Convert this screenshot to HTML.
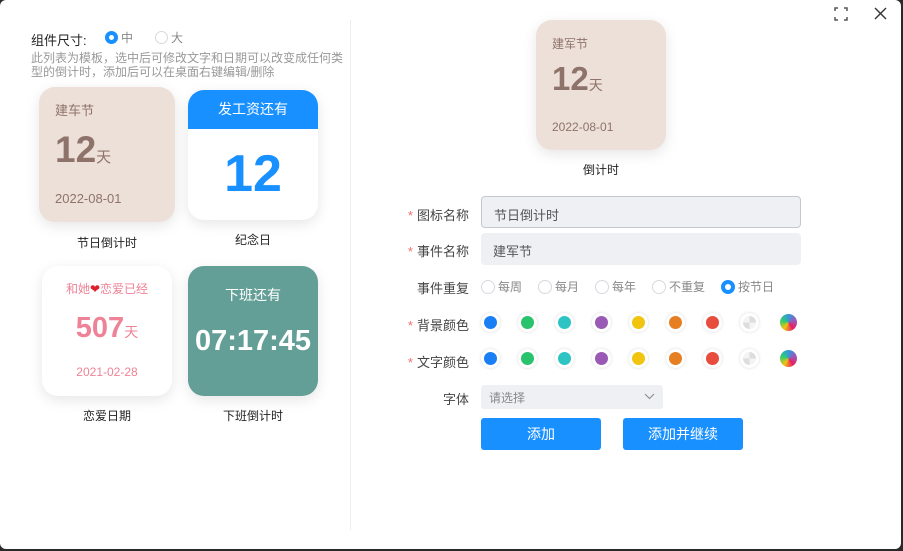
<!DOCTYPE html>
<html><head><meta charset="utf-8"><style>
*{box-sizing:border-box;margin:0;padding:0}
body{width:903px;height:551px;background:#2a2a2a;font-family:"Liberation Sans","Noto Sans CJK SC",sans-serif;position:relative;overflow:hidden}
.win{position:absolute;left:0;top:0;width:901px;height:549px;background:#fff;border-radius:6px}
.a{position:absolute}
.card{position:absolute;border-radius:16px;box-shadow:0 4px 14px rgba(0,0,0,.1);overflow:hidden}
.lbl{position:absolute;font-size:12px;color:#222;text-align:center}
.fl{position:absolute;font-size:13px;color:#444;right:432px;text-align:right;white-space:nowrap}
.fl b{color:#f56c6c;font-weight:normal;margin-right:4px}
.inp{position:absolute;left:481px;width:320px;height:32px;background:#eff0f4;border-radius:4px;font-size:13px;color:#555;padding:8px 12px}
.rad{position:absolute;top:278px;font-size:12px;color:#888;display:flex;align-items:center}
.rad i{display:inline-block;width:14px;height:14px;border:1px solid #d6d9df;border-radius:50%;margin-right:3px}
.rad i.on{border:4px solid #1890ff}
.dot{position:absolute;width:19px;height:19px;border-radius:50%;background:#fff;box-shadow:0 0 3px rgba(0,0,0,.15)}
.dot span{position:absolute;left:3px;top:3px;width:13px;height:13px;border-radius:50%}
.btn{position:absolute;top:418px;width:120px;height:32px;background:#1890ff;color:#fff;font-size:14px;border-radius:3px;text-align:center;line-height:32px}
</style></head><body><div class="win">
<div class="a" style="left:31px;top:30px;font-size:13px;color:#222">组件尺寸:</div>
<div class="a" style="left:105px;top:29px;font-size:12px;color:#888;display:flex;align-items:center"><i style="display:inline-block;width:13px;height:13px;border:4px solid #1890ff;border-radius:50%;margin-right:3px"></i>中<i style="display:inline-block;width:13px;height:13px;border:1px solid #d6d9df;border-radius:50%;margin:0 3px 0 22px"></i>大</div>
<div class="a" style="left:31px;top:51px;width:318px;font-size:12px;line-height:14px;color:#999">此列表为模板，选中后可修改文字和日期可以改变成任何类型的倒计时，添加后可以在桌面右键编辑/删除</div>
<div class="a" style="left:350px;top:20px;width:1px;height:510px;background:#eee"></div>

<div class="card" style="left:39px;top:87px;width:136px;height:135px;background:#ede0d9;color:#8e736a">
<div class="a" style="left:16px;top:13px;font-size:13px">建车节</div>
<div class="a" style="left:16px;top:42px;font-size:37px;font-weight:bold">12<span style="font-size:15px;font-weight:normal">天</span></div>
<div class="a" style="left:16px;top:104px;font-size:13px">2022-08-01</div></div>
<div class="lbl" style="left:39px;top:234px;width:136px">节日倒计时</div>

<div class="card" style="left:188px;top:90px;width:130px;height:130px;background:#fff">
<div class="a" style="left:0;top:0;width:130px;height:39px;background:#1890ff;color:#fff;font-size:14px;text-align:center;line-height:39px">发工资还有</div>
<div class="a" style="left:0;top:54px;width:130px;text-align:center;font-size:52px;font-weight:bold;color:#1890ff">12</div></div>
<div class="lbl" style="left:188px;top:231px;width:130px">纪念日</div>

<div class="card" style="left:42px;top:266px;width:130px;height:130px;background:#fff;color:#ee8296">
<div class="a" style="left:0;top:14px;width:130px;text-align:center;font-size:12px">和她<span style="color:#e0202a">❤</span>恋爱已经</div>
<div class="a" style="left:0;top:46px;width:130px;text-align:center;font-size:29px;font-weight:bold">507<span style="font-size:14px;font-weight:normal">天</span></div>
<div class="a" style="left:0;top:99px;width:130px;text-align:center;font-size:12px">2021-02-28</div></div>
<div class="lbl" style="left:42px;top:407px;width:130px">恋爱日期</div>

<div class="card" style="left:188px;top:266px;width:130px;height:130px;background:#639f97;color:#fff">
<div class="a" style="left:0;top:19px;width:130px;text-align:center;font-size:14px">下班还有</div>
<div class="a" style="left:0;top:59px;width:130px;text-align:center;font-size:29px;font-weight:bold">07:17:45</div></div>
<div class="lbl" style="left:188px;top:407px;width:130px">下班倒计时</div>

<svg class="a" style="left:834px;top:7px" width="14" height="14" fill="none" stroke="#555" stroke-width="1.5"><path d="M1 4V1h3M10 1h3v3M13 10v3h-3M4 13H1v-3"/></svg>
<svg class="a" style="left:874px;top:7px" width="13" height="13" stroke="#333" stroke-width="1.4"><path d="M1 1L12 12M12 1L1 12"/></svg>

<div class="card" style="left:536px;top:20px;width:130px;height:130px;background:#ede0d9;color:#8e736a">
<div class="a" style="left:16px;top:15px;font-size:12px">建军节</div>
<div class="a" style="left:16px;top:40px;font-size:33px;font-weight:bold">12<span style="font-size:14px;font-weight:normal">天</span></div>
<div class="a" style="left:16px;top:100px;font-size:12px">2022-08-01</div></div>
<div class="lbl" style="left:536px;top:161px;width:130px">倒计时</div>

<div class="fl" style="top:205px"><b>*</b>图标名称</div>
<div class="inp" style="top:196px;border:1px solid #c4c7ce">节日倒计时</div>
<div class="fl" style="top:241px"><b>*</b>事件名称</div>
<div class="inp" style="top:233px">建军节</div>
<div class="fl" style="top:278px">事件重复</div>
<div class="rad" style="left:481px"><i></i>每周</div>
<div class="rad" style="left:538px"><i></i>每月</div>
<div class="rad" style="left:595px"><i></i>每年</div>
<div class="rad" style="left:652px"><i></i>不重复</div>
<div class="rad" style="left:721px"><i class="on"></i>按节日</div>
<div class="fl" style="top:315px"><b>*</b>背景颜色</div>
<div class="fl" style="top:352px"><b>*</b>文字颜色</div>
<div id="dots"></div>
<div class="fl" style="top:389px">字体</div>
<div class="a" style="left:481px;top:385px;width:182px;height:24px;background:#eff0f4;border-radius:3px;font-size:12px;color:#888;padding:4px 8px">请选择<svg style="position:absolute;right:8px;top:8px" width="11" height="7" fill="none" stroke="#888"><path d="M1 1l4.5 4.5L10 1"/></svg></div>
<div class="btn" style="left:481px">添加</div>
<div class="btn" style="left:623px">添加并继续</div>
</div>
<script>
var c=["#1a7ff5","#2ac36d","#2ec4c4","#9b59b6","#f1c40f","#e67e22","#e74c3c","conic-gradient(#ddd 0 25%,#f4f4f4 0 50%,#ddd 0 75%,#f4f4f4 0)","conic-gradient(#3498db,#9b59b6,#e91e63,#f1c40f,#2ecc71,#3498db)"];
var x=[491,528,565,602,639,676,713,750,789],h="";
[323,359].forEach(function(y){c.forEach(function(col,i){h+='<div class="dot" style="left:'+(x[i]-10)+'px;top:'+(y-10)+'px'+(i==8?';box-shadow:none':'')+'"><span style="background:'+col+(i==8?';left:1px;top:1px;width:17px;height:17px':'')+'"></span></div>'})});
document.getElementById('dots').innerHTML=h;
</script>
</body></html>
